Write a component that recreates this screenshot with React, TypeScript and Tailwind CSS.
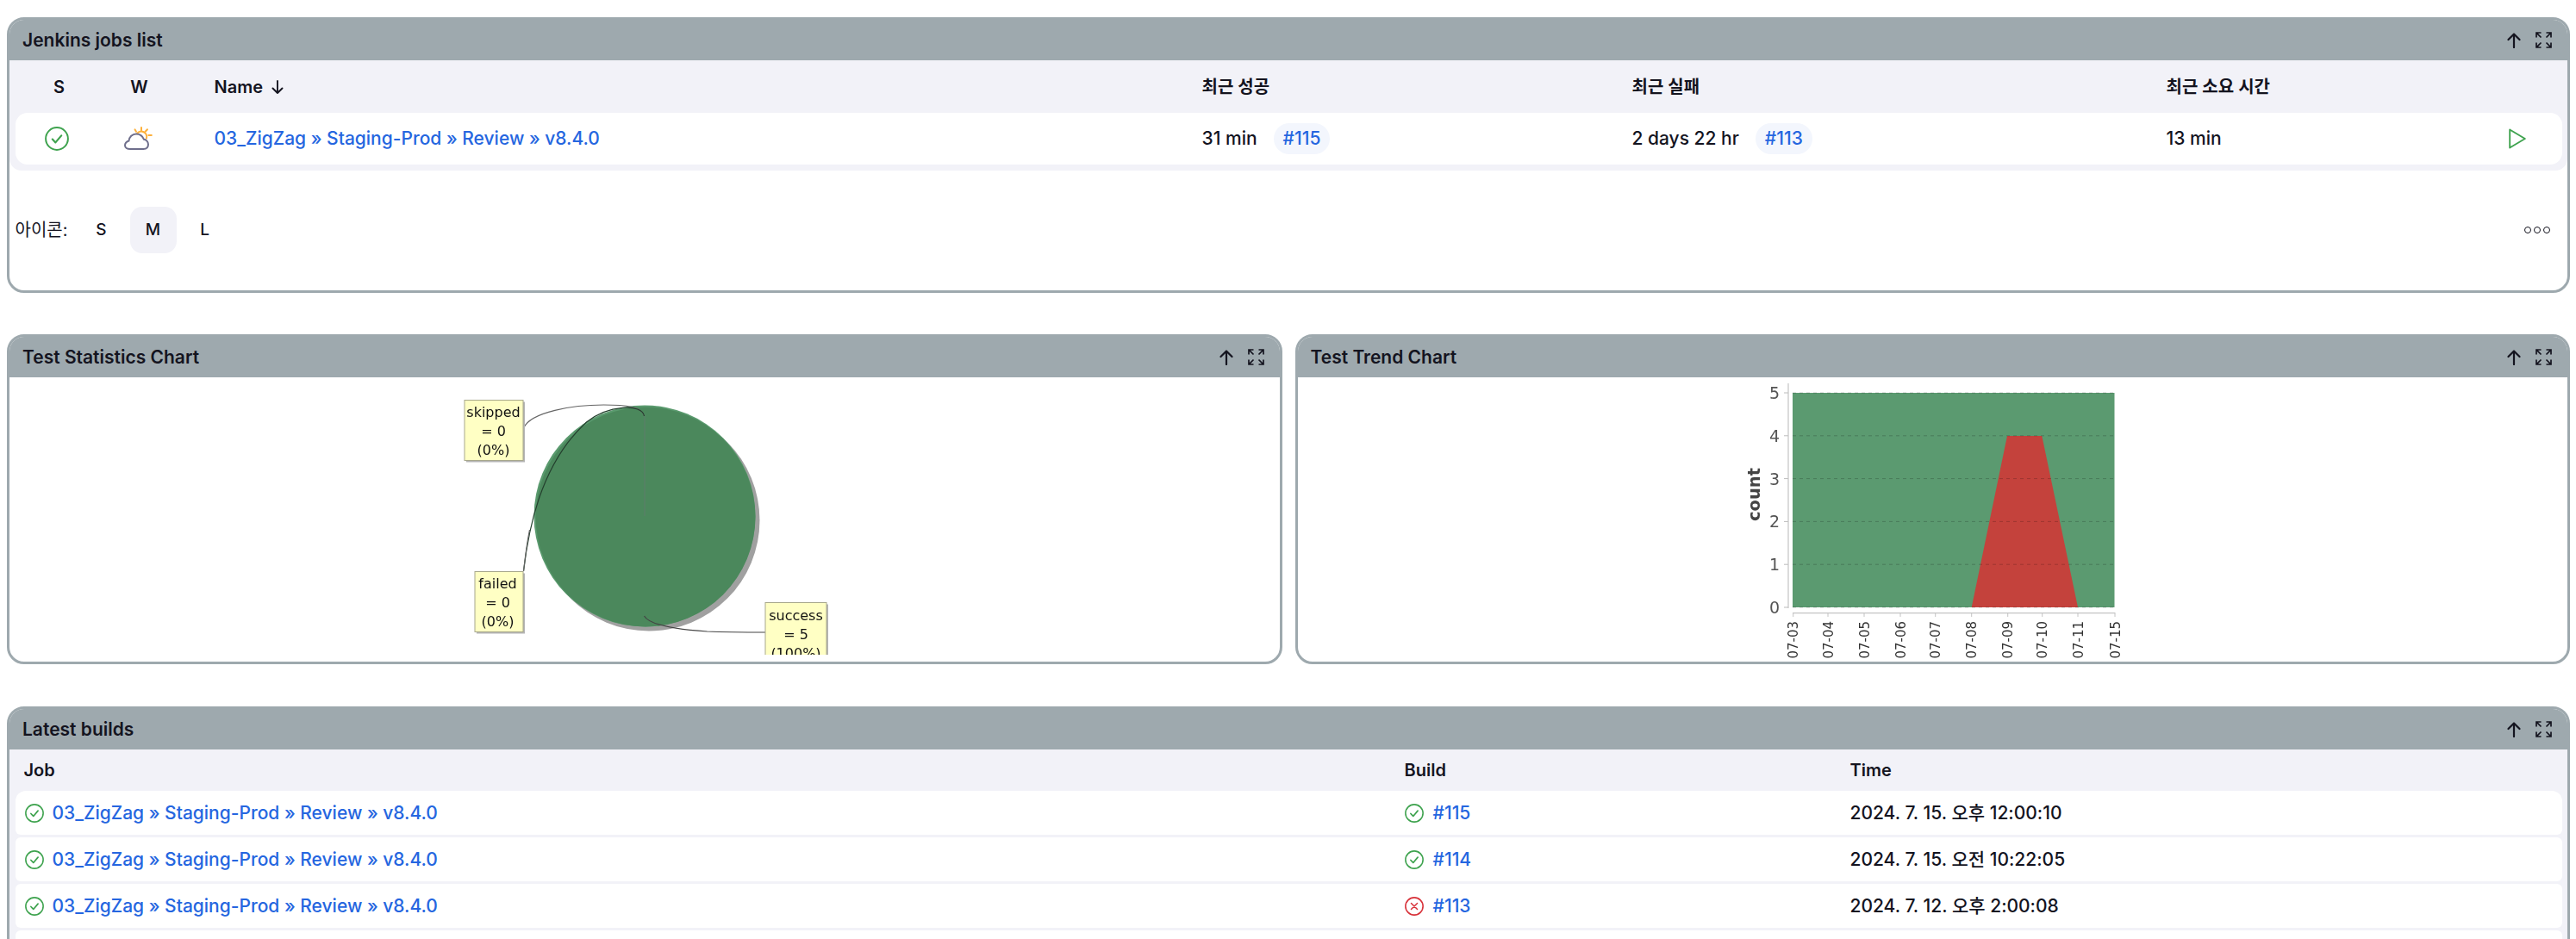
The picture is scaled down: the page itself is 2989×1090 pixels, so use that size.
import React from "react";

const link = "03_ZigZag » Staging-Prod » Review » v8.4.0";

function Ok({ size }: { size: number }) {
  return (
    <svg width={size} height={size} viewBox="0 0 28 28" fill="none" stroke="#3fa34f" className="shrink-0">
      <circle cx="14" cy="14" r="12.9" strokeWidth="2" />
      <path d="M8.8 14.6l3.6 3.8 6.8-8" strokeWidth="2.2" strokeLinecap="round" strokeLinejoin="round" />
    </svg>
  );
}

function Fail({ size }: { size: number }) {
  return (
    <svg width={size} height={size} viewBox="0 0 28 28" fill="none" stroke="#d8323a" className="shrink-0">
      <circle cx="14" cy="14" r="12.9" strokeWidth="2" />
      <path d="M9.5 9.5l9 9M18.5 9.5l-9 9" strokeWidth="1.9" strokeLinecap="round" />
    </svg>
  );
}

function Weather() {
  return (
    <svg width="33" height="28" viewBox="0 0 33 28" fill="none" strokeLinecap="round">
      <g stroke="#fdb03a" strokeWidth="2">
        <path d="M15 8.2A6.2 6.2 0 0 1 26 13.5" />
        <path d="M20 1v3.2M12.6 3.4l1.4 2.3M27 3.2l-2.4 2.5M28.4 10h3.4" />
      </g>
      <path
        d="M7 26H22.5C26 26 28 23.7 28 20.5C28 17.5 25.5 15 23 14.8C21.5 11 18 8.5 14 8.5C9.5 8.5 6 12 5.5 16.5C3 17.3 1 19.5 1 21.8C1 24.3 3.5 26 7 26Z"
        stroke="#6f6f8c"
        strokeWidth="2"
      />
    </svg>
  );
}

function PanelHeader({ title }: { title: string }) {
  return (
    <div className="flex h-[47px] items-center justify-between bg-[#9ea9ae] pl-[15px] pr-[18px]">
      <span className="text-[21px] font-semibold text-[#14141f]">{title}</span>
      <div className="flex items-center gap-[17px]">
        <svg width="16" height="18" viewBox="0 0 16 18" fill="none" stroke="#14141f" strokeWidth="2.2" strokeLinecap="round" strokeLinejoin="round">
          <path d="M8 17V1.5M1.5 8L8 1.5L14.5 8" />
        </svg>
        <svg width="19" height="19" viewBox="0 0 19 19" fill="none" stroke="#14141f" strokeWidth="1.7">
          <path d="M1 6.5V1H6.5M1.2 1.2L6.5 6.5M12.5 1H18V6.5M17.8 1.2L12.5 6.5M1 12.5V18H6.5M1.2 17.8L6.5 12.5M12.5 18H18V12.5M17.8 17.8L12.5 12.5" />
        </svg>
      </div>
    </div>
  );
}

function Card({ title, className, children }: { title: string; className?: string; children: React.ReactNode }) {
  return (
    <section className={`overflow-hidden rounded-[20px] border-[3px] border-[#9ea9ae] bg-white ${className ?? ""}`}>
      <PanelHeader title={title} />
      {children}
    </section>
  );
}

function BuildPill({ n }: { n: string }) {
  return <a className="ml-[19px] inline-flex h-[36px] items-center rounded-full bg-[#f3f6fd] px-[11px] font-medium text-[#2566e0]">{n}</a>;
}

function JobsList() {
  const cols = "grid-cols-[102px_84px_1191px_499px_620px_397px_1fr]";
  return (
    <Card title="Jenkins jobs list" className="h-[320px]">
      <div className="rounded-b-[14px] bg-[#f2f2f8] px-[6.5px] pb-[7px] text-[21px] text-[#14141f]">
        <div className={`grid h-[61px] items-center text-[20px] font-semibold ${cols}`}>
          <span className="text-center">S</span>
          <span className="text-center">W</span>
          <span className="flex items-center gap-[10px] pl-[45px]">
            Name
            <svg width="14" height="16" viewBox="0 0 14 16" fill="none" stroke="#14141f" strokeWidth="1.9" strokeLinecap="round" strokeLinejoin="round">
              <path d="M7 1V15M1.5 9.5L7 15L12.5 9.5" />
            </svg>
          </span>
          <span>최근 성공</span>
          <span>최근 실패</span>
          <span>최근 소요 시간</span>
          <span />
        </div>
        <div className={`grid h-[60px] items-center rounded-[14px] bg-white font-medium ${cols}`}>
          <span className="flex justify-center pr-[6px]"><Ok size={28} /></span>
          <span className="flex justify-center pr-[2px]"><Weather /></span>
          <a className="pl-[45px] text-[#2566e0]">{link}</a>
          <span className="flex items-center">31 min<BuildPill n="#115" /></span>
          <span className="flex items-center">2 days 22 hr<BuildPill n="#113" /></span>
          <span>13 min</span>
          <span>
            <svg width="20" height="24" viewBox="0 0 20 24" fill="none" stroke="#3fa34f" strokeWidth="1.9" strokeLinejoin="round">
              <path d="M1.2 1.5L18.8 12L1.2 22.5Z" />
            </svg>
          </span>
        </div>
      </div>
      <div className="flex items-center justify-between pl-[6.5px] pr-[20px] pt-[42px] text-[19px] text-[#14141f]">
        <div className="flex items-center">
          <span className="w-[73px] whitespace-nowrap text-[20px]">아이콘:</span>
          <div className="flex gap-[6px] font-medium">
            <span className="flex h-[54px] w-[54px] items-center justify-center">S</span>
            <span className="flex h-[54px] w-[54px] items-center justify-center rounded-[14px] bg-[#f2f2f8]">M</span>
            <span className="flex h-[54px] w-[54px] items-center justify-center">L</span>
          </div>
        </div>
        <div className="flex gap-[3px]">
          <span className="h-[8px] w-[8px] rounded-full border border-[#14141f]" />
          <span className="h-[8px] w-[8px] rounded-full border border-[#14141f]" />
          <span className="h-[8px] w-[8px] rounded-full border border-[#14141f]" />
        </div>
      </div>
    </Card>
  );
}

function Note({ x, y, w, h, lines, cx, base }: { x: number; y: number; w: number; h: number; lines: string[]; cx: number; base: number }) {
  return (
    <g>
      <rect x={x + 2} y={y + 2} width={w} height={h} fill="#b5b5b5" />
      <rect x={x} y={y} width={w} height={h} fill="#ffffc4" stroke="#a8a88c" strokeWidth="1" />
      {lines.map((l, i) => (
        <text key={l} x={cx} y={base + i * 22} textAnchor="middle" fontSize="16" fill="#111" fontFamily="'DejaVu Sans', sans-serif">
          {l}
        </text>
      ))}
    </g>
  );
}

function PieChart() {
  return (
    <svg width="500" height="322" viewBox="497.5 438 500 322" className="blur-[0.5px]">
      <circle cx="752.5" cy="604" r="128.5" fill="#a0a0a0" />
      <circle cx="747.5" cy="599" r="128.5" fill="#5a9a6e" />
      <circle cx="748.5" cy="600" r="127.5" fill="#4b885c" />
      <path d="M747.5 483V599" stroke="#5f7d6a" strokeWidth="1" />
      <g fill="none" strokeWidth="1.2">
        <path d="M607 497C615 478 665 470 700 470C725 470 745 472 747 483" stroke="#666" />
        <path d="M607 663C612 620 625 540 680 490C705 470 745 468 747 483" stroke="#24402e" />
        <path d="M607 663C609 645 611 630 614 615" stroke="#666" />
        <path d="M747 715C752 724 775 730 820 733C845 734 865 734 888 734" stroke="#444" />
      </g>
      <Note x={538.5} y={464.5} w={68} h={70} lines={["skipped", "= 0", "(0%)"]} cx={572} base={484} />
      <Note x={550.5} y={663.5} w={56} h={70} lines={["failed", "= 0", "(0%)"]} cx={577} base={683} />
      <Note x={887.5} y={699.5} w={71} h={70} lines={["success", "= 5", "(100%)"]} cx={923} base={720} />
    </svg>
  );
}

function TrendChart() {
  const xs = [2080.7, 2121, 2163, 2205, 2245.7, 2287.7, 2329.7, 2369.7, 2411, 2454];
  const labels = ["07-03", "07-04", "07-05", "07-06", "07-07", "07-08", "07-09", "07-10", "07-11", "07-15"];
  const ys = [705, 655.2, 605.4, 555.6, 505.8, 456];
  const font = "'DejaVu Sans', sans-serif";
  return (
    <svg width="500" height="330" viewBox="1992 438 500 330" className="blur-[0.5px]">
      <rect x="2080" y="456" width="373.5" height="249" fill="#5b9a70" />
      <polygon points="2287.7,705 2329,506 2369.3,506 2411,705" fill="#c4423c" />
      {ys.map((y, i) => (
        <g key={y}>
          <line x1="2080" x2="2453" y1={y} y2={y} stroke="#000" strokeOpacity="0.2" strokeDasharray="4 4" />
          <line x1="2070" x2="2075" y1={y} y2={y} stroke="#bbb" />
          <text x="2065" y={y + 7} textAnchor="end" fontSize="19" fill="#555" fontFamily={font}>{i}</text>
        </g>
      ))}
      <line x1="2075" x2="2075" y1="445" y2="706" stroke="#c4c4c4" strokeWidth="1.2" />
      <line x1="2080" x2="2454.5" y1="711.7" y2="711.7" stroke="#c4c4c4" strokeWidth="1.2" />
      <text transform="rotate(-90 2042 574)" x="2042" y="574" textAnchor="middle" fontSize="19.5" fontWeight="700" fill="#444" fontFamily={font}>count</text>
      {xs.map((x, i) => (
        <g key={x}>
          <line x1={x} x2={x} y1="712" y2="716" stroke="#c4c4c4" />
          <text transform={`rotate(-90 ${x + 5.5} 721)`} x={x + 5.5} y="721" textAnchor="end" fontSize="15" fill="#333" fontFamily={font}>{labels[i]}</text>
        </g>
      ))}
    </svg>
  );
}

function LatestBuilds() {
  const rows = [
    { n: "#115", ok: true, t: "2024. 7. 15. 오후 12:00:10" },
    { n: "#114", ok: true, t: "2024. 7. 15. 오전 10:22:05" },
    { n: "#113", ok: false, t: "2024. 7. 12. 오후 2:00:08" },
  ];
  const cols = "grid-cols-[1612px_517px_1fr]";
  return (
    <Card title="Latest builds">
      <div className="bg-[#f2f2f8] px-[6.5px] text-[21px] text-[#14141f]">
        <div className={`grid h-[48px] items-center text-[20px] font-semibold ${cols}`}>
          <span className="pl-[10px]">Job</span>
          <span>Build</span>
          <span>Time</span>
        </div>
        {rows.map((r, i) => (
          <div key={r.n} className={`mb-[3px] grid h-[51px] items-center rounded-[6px] bg-white font-medium ${i === 0 ? "rounded-t-[12px]" : ""} ${cols}`}>
            <span className="flex items-center gap-[10px] pl-[11px]">
              <Ok size={22} />
              <a className="text-[#2566e0]">{link}</a>
            </span>
            <span className="flex items-center gap-[11px]">
              {r.ok ? <Ok size={22} /> : <Fail size={22} />}
              <a className="text-[#2566e0]">{r.n}</a>
            </span>
            <span>{r.t}</span>
          </div>
        ))}
        <div className="h-[51px] rounded-[6px] bg-white" />
      </div>
    </Card>
  );
}

export default function App() {
  return (
    <div className="h-[1090px] overflow-hidden bg-white pl-[8px] pr-[7px] pt-[20px] font-[Inter,'Noto_Sans_CJK_KR',sans-serif]">
      <JobsList />
      <div className="mt-[48px] flex h-[383px] gap-[15px]">
        <Card title="Test Statistics Chart" className="flex-1">
          <div className="flex h-[330px] justify-center"><PieChart /></div>
        </Card>
        <Card title="Test Trend Chart" className="flex-1">
          <div className="flex h-[330px] justify-center"><TrendChart /></div>
        </Card>
      </div>
      <div className="mt-[49px]">
        <LatestBuilds />
      </div>
    </div>
  );
}
